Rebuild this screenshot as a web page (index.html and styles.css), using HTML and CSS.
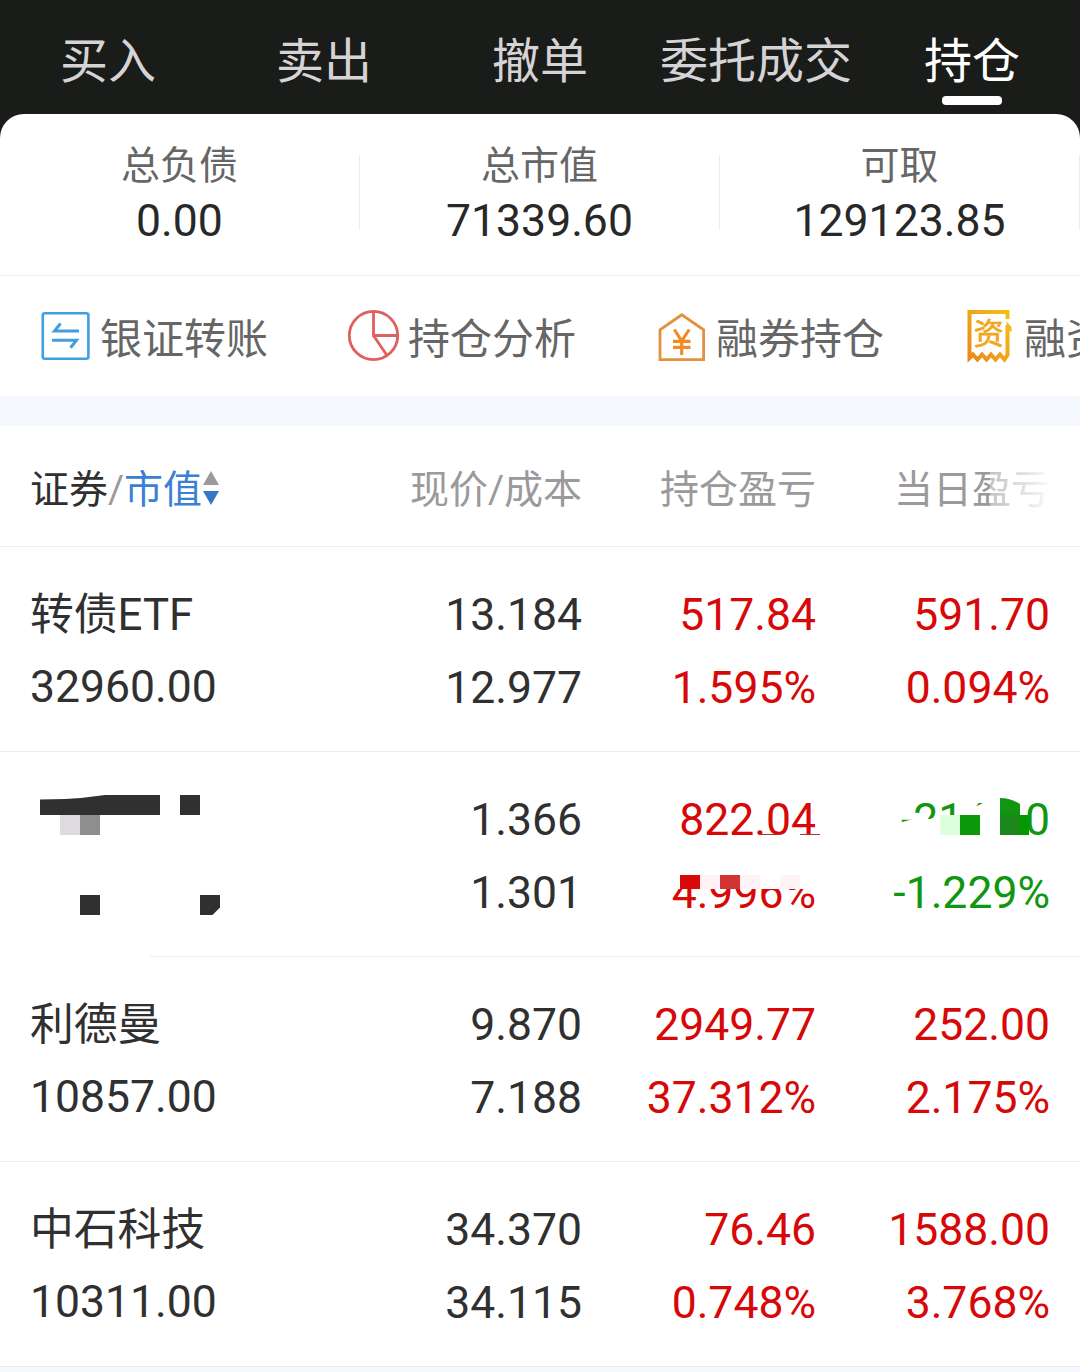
FILE: index.html
```html
<!DOCTYPE html>
<html lang="zh-CN">
<head>
  <meta charset="UTF-8">
  <title>持仓</title>
  <link rel="stylesheet" href="styles.css">
</head>
<body>
  <nav class="tabs">
    <a class="tab">买入</a>
    <a class="tab">卖出</a>
    <a class="tab">撤单</a>
    <a class="tab">委托成交</a>
    <a class="tab active">持仓</a>
  </nav>

  <!-- Account summary -->
  <div class="summary-wrap">
    <div class="summary">
      <div class="summary-item">
        <div class="summary-label">总负债</div>
        <div class="summary-value">0.00</div>
      </div>
      <div class="summary-item">
        <div class="summary-label">总市值</div>
        <div class="summary-value">71339.60</div>
      </div>
      <div class="summary-item">
        <div class="summary-label">可取</div>
        <div class="summary-value">129123.85</div>
      </div>
    </div>
  </div>

  <!-- Shortcuts -->
  <div class="actions">
    <div class="action">
      <svg class="icon" width="60" height="60" viewBox="0 0 60 60" fill="none" stroke="#3f9fe0" stroke-width="2.6">
        <rect x="7.8" y="8.2" width="45.6" height="45.6" rx="2"/>
        <path d="M44 26H19.5L25.5 18.5M17 35.2H41.5L35.5 42.7" stroke-width="3"/>
      </svg>
      <span>银证转账</span>
    </div>
    <div class="action">
      <svg class="icon" width="60" height="60" viewBox="0 0 60 60" fill="none" stroke="#e05f5f" stroke-width="2.8">
        <circle cx="30.5" cy="30.5" r="24.2"/>
        <path d="M30.5 6V30.5H54.5M30.5 30.5L44 50.5"/>
      </svg>
      <span>持仓分析</span>
    </div>
    <div class="action">
      <svg class="icon" width="60" height="60" viewBox="0 0 60 60" fill="none" stroke="#e39040" stroke-width="2.8">
        <path d="M9 54.6V24.8L30.8 9.8L52.6 24.8V54.6Z"/>
        <path d="M23.3 24.5L30.7 36L38.2 24.5M30.7 36V50M22 36.3H39.5M22 42.3H39.5" stroke="#f28a25" stroke-width="3.2"/>
      </svg>
      <span>融券持仓</span>
    </div>
    <div class="action">
      <svg class="icon" width="60" height="60" viewBox="0 0 60 60">
        <defs>
          <linearGradient id="gold" x1="0" y1="1" x2="1" y2="0">
            <stop offset="0" stop-color="#e98a1c"/>
            <stop offset="1" stop-color="#f6bd16"/>
          </linearGradient>
        </defs>
        <path d="M48.5 14V7H10.5V53L14 49.5L18.5 54.5L23 49.5L27.5 54.5L32 49.5L36.5 54.5L41 49.5L45.5 54.5L48.5 50V20" fill="none" stroke="url(#gold)" stroke-width="4"/>
        <path d="M47 16L52.5 22V27L49 25Z" fill="#f6b91b"/>
        <text class="icon-text" x="14.8" y="39">资</text>
      </svg>
      <span>融资负债</span>
    </div>
  </div>

  <!-- Holdings -->
  <div class="holdings">
    <div class="row head">
      <div class="head-name">证券<i>/</i><b>市值</b>
        <svg class="sort" width="16" height="35" viewBox="0 0 16 35">
          <path d="M8 0L16 14H0Z" fill="#9b999b"/>
          <path d="M0 20H16L8 34Z" fill="#3377c8"/>
        </svg>
      </div>
      <div>现价/成本</div>
      <div>持仓盈亏</div>
      <div class="fade">当日盈亏</div>
    </div>

    <div class="row">
      <div class="stock"><p>转债ETF</p><p>32960.00</p></div>
      <div><p>13.184</p><p>12.977</p></div>
      <div class="up"><p>517.84</p><p>1.595%</p></div>
      <div class="up"><p>591.70</p><p>0.094%</p></div>
    </div>

    <div class="row">
      <div class="stock"></div>
      <div><p>1.366</p><p>1.301</p></div>
      <div class="up"><p>822.04</p><p>4.996%</p></div>
      <div class="down"><p>-214.00</p><p>-1.229%</p></div>
      <!-- Mosaic over the private holding -->
      <svg class="mosaic" width="1080" height="205" viewBox="0 752 1080 205">
        <g fill="#303030">
          <path d="M40 799.5L65 799Q85 798 105 795H160V815H40Z"/>
          <rect x="180" y="795" width="20" height="20"/>
          <rect x="80" y="895" width="20" height="20"/>
          <path d="M200 895H220V907.5L212.5 915H200Z"/>
        </g>
        <rect x="60" y="815" width="20" height="20" fill="#dedade"/>
        <rect x="80" y="815" width="20" height="20" fill="#8e8e8e"/>
        <rect x="0" y="955" width="150" height="2" fill="#fff"/>

        <path d="M665 835H825V838H665ZM665 870H825V889H665Z" fill="#fff"/>
        <path d="M760 834H780V835H760ZM800 834H820V835H800Z" fill="#b83030"/>
        <rect x="680" y="875" width="20" height="14" fill="#d90909"/>
        <rect x="700" y="875" width="20" height="14" fill="#fff1f5"/>
        <rect x="720" y="875" width="20" height="14" fill="#d33333"/>
        <path d="M740 875H760V889H740ZM780 875H800V889H780Z" fill="#fff3f5"/>

        <path d="M895 824L915 818.5L930 819L940 815H955L960 811L975 807L985 802V795H1027V840H895Z" fill="#fff"/>
        <rect x="940" y="815" width="20" height="20" fill="#dcffdc"/>
        <rect x="960" y="815" width="20" height="20" fill="#0a990a"/>
        <path d="M1000 798Q1011 798 1020 804V815H1000Z" fill="#109610"/>
        <rect x="1000" y="815" width="20" height="20" fill="#1c881c"/>
        <rect x="1020" y="815" width="9" height="20" fill="#009900"/>
      </svg>
    </div>

    <div class="row">
      <div class="stock"><p>利德曼</p><p>10857.00</p></div>
      <div><p>9.870</p><p>7.188</p></div>
      <div class="up"><p>2949.77</p><p>37.312%</p></div>
      <div class="up"><p>252.00</p><p>2.175%</p></div>
    </div>

    <div class="row">
      <div class="stock"><p>中石科技</p><p>10311.00</p></div>
      <div><p>34.370</p><p>34.115</p></div>
      <div class="up"><p>76.46</p><p>0.748%</p></div>
      <div class="up"><p>1588.00</p><p>3.768%</p></div>
    </div>
  </div>
</body>
</html>
```
FILE: styles.css
```css
* {
  box-sizing: border-box;
}
body {
  margin: 0;
  width: 1080px;
  height: 1372px;
  overflow: hidden;
  background: #f5f9ff;
  color: #303030;
  font-family: Roboto, "Noto Sans CJK SC", sans-serif;
}
p {
  margin: 0;
}

/* Tabs */
.tabs {
  display: flex;
  height: 114px;
  background: #191c19;
}
.tab {
  flex: 1;
  display: flex;
  flex-direction: column;
  align-items: center;
  padding-top: 28px;
  font-size: 48px;
  line-height: 68px;
  color: #d6d3d6;
}
.tab.active {
  color: #fff;
}
.tab.active::after {
  content: "";
  width: 60px;
  height: 9px;
  border-radius: 4px;
  background: #fff;
}

/* Summary */
.summary-wrap {
  background: #191c19;
}
.summary {
  display: flex;
  height: 162px;
  padding-top: 41px;
  background: #fff;
  border-radius: 24px 24px 0 0;
  border-bottom: 1px solid #ececec;
}
.summary-item {
  flex: 1;
  height: 75px;
  border-right: 1px solid #ececec;
  text-align: center;
}
.summary-label {
  margin-top: -18px;
  font-size: 39px;
  line-height: 58px;
  color: #666;
}
.summary-value {
  font-size: 44.5px;
  line-height: 52px;
  color: #282828;
}

/* Shortcuts */
.actions {
  display: flex;
  height: 120px;
  padding-left: 35px;
  overflow: hidden;
  background: #fff;
}
.action {
  flex: 0 0 308px;
  display: flex;
  gap: 5px;
  padding-top: 29px;
  font-size: 42px;
  line-height: 70px;
  color: #666;
  white-space: nowrap;
}
.icon {
  flex: none;
}
.icon-text {
  font-size: 30px;
  font-family: "Noto Sans CJK SC", sans-serif;
  fill: #f2a71b;
  stroke: #f2a71b;
  stroke-width: 0.7px;
}

/* Holdings */
.holdings {
  margin-top: 30px;
  background: #fff;
}
.row {
  display: grid;
  grid-template-columns: 318px 234px 234px 234px;
  position: relative;
  height: 205px;
  padding: 32px 30px 0;
  border-bottom: 1px solid #ececec;
  font-size: 44.5px;
  line-height: 73px;
  text-align: right;
}
.row .stock {
  text-align: left;
  margin-top: -1px;
}
.stock p:first-child {
  height: 73px;
  padding-top: 1px;
  font-size: 43.8px;
}
.up {
  color: #d60808;
}
.down {
  color: #109610;
}
.row.head {
  height: 121px;
  padding-top: 27px;
  font-size: 39px;
  line-height: 74px;
  color: #9b999b;
}
.head-name {
  display: flex;
  align-items: center;
  height: 74px;
  color: #303030;
}
.head-name i {
  font-style: normal;
  color: #9b999b;
}
.head-name b {
  font-weight: normal;
  color: #3b80d4;
}
.sort {
  margin: -4px 0 0 1px;
}
.fade {
  position: relative;
}
.fade::after {
  content: "";
  position: absolute;
  top: 0;
  right: 0;
  width: 60px;
  height: 74px;
  background: linear-gradient(to right, rgba(255, 255, 255, 0.4), rgba(255, 255, 255, 0.95));
}
.mosaic {
  position: absolute;
  top: 0;
  left: 0;
}
```
